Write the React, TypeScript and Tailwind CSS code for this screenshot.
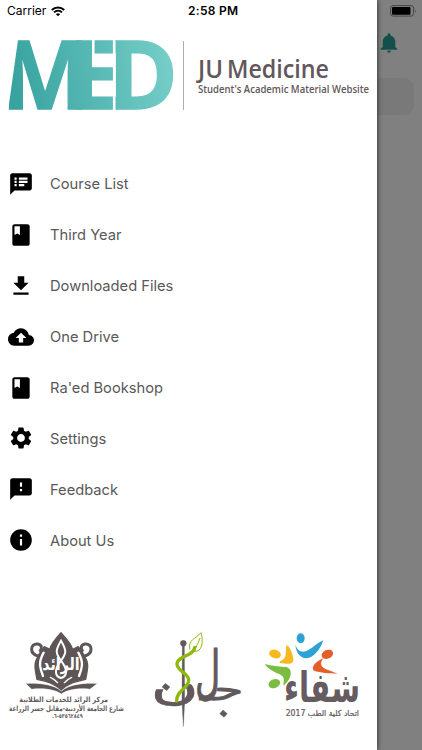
import React from 'react';
import {
  MdSpeakerNotes,
  MdBook,
  MdFileDownload,
  MdBackup,
  MdSettings,
  MdFeedback,
  MdInfo,
} from 'react-icons/md';
import { IoMdNotifications } from 'react-icons/io';
import type { IconType } from 'react-icons';

interface MenuItem {
  label: string;
  icon: IconType;
}

const menuItems: MenuItem[] = [
  { label: 'Course List', icon: MdSpeakerNotes },
  { label: 'Third Year', icon: MdBook },
  { label: 'Downloaded Files', icon: MdFileDownload },
  { label: 'One Drive', icon: MdBackup },
  { label: "Ra'ed Bookshop", icon: MdBook },
  { label: 'Settings', icon: MdSettings },
  { label: 'Feedback', icon: MdFeedback },
  { label: 'About Us', icon: MdInfo },
];

const arabic = "overflow-visible font-['DejaVu_Sans',sans-serif]";

const StatusBar: React.FC = () => (
  <div className="flex h-[22px] items-center text-black">
    <span className="ml-[7px] w-[40px] text-[12px]">Carrier</span>
    <svg className="ml-[4px]" width="14" height="11" viewBox="0 0 14 11" fill="none" stroke="#000">
      <path d="M0.8 4A9 9 0 0 1 13.2 4" strokeWidth="2" />
      <path d="M3 6.3A5.9 5.9 0 0 1 11 6.3" strokeWidth="1.8" />
      <path d="M7 10.3L4.9 8.2A3 3 0 0 1 9.1 8.2Z" fill="#000" stroke="none" />
    </svg>
    <span className="ml-[123px] text-[12px] font-semibold tracking-[0.3px] whitespace-nowrap">2:58 PM</span>
  </div>
);

const MedLogo: React.FC = () => (
  <svg className="overflow-visible" width="377" height="90" viewBox="0 22 377 90">
    <defs>
      <linearGradient id="teal" gradientUnits="userSpaceOnUse" x1="8" y1="90" x2="173" y2="60">
        <stop offset="0" stopColor="#36a19e" />
        <stop offset="1" stopColor="#76cec8" />
      </linearGradient>
    </defs>
    <text
      x="1 68.5 108"
      y="109"
      fill="url(#teal)"
      stroke="url(#teal)"
      strokeWidth="1.4"
      fontSize="94.5"
      fontWeight="700"
      className="font-['Open_Sans',sans-serif]"
    >
      MED
    </text>
    {/* slanted outer edge of the M, and the gaps around the E */}
    <path d="M6 40H18L8 111H6Z" fill="#fff" />
    <path d="M93.3 40V55.5M114.2 40V111" stroke="#fff" strokeWidth="2.6" />
    <path d="M183.5 41V110" stroke="#b0acac" strokeWidth="1" />
    <g fill="#62575a" className="font-['Open_Sans',sans-serif]">
      <text x="198" y="78" fontSize="25" fontWeight="600" textLength="25" lengthAdjust="spacingAndGlyphs">JU</text>
      <text x="227" y="78" fontSize="25" fontWeight="600" textLength="102" lengthAdjust="spacingAndGlyphs">Medicine</text>
      <text x="198" y="92.5" fontSize="11" fontWeight="600" textLength="171" lengthAdjust="spacingAndGlyphs">Student's Academic Material Website</text>
    </g>
  </svg>
);

const BookshopLogo: React.FC = () => (
  <svg width="130" height="110" viewBox="0 0 390 330" className={arabic}>
    <g fill="#5e5557" stroke="#5e5557" strokeLinejoin="round">
      <path d="M168 38C150 58 138 72 134 88L118 80C106 96 100 104 98 112C84 130 92 156 96 178C124 184 150 190 168 212C187 190 214 184 242 178C246 156 254 130 240 112C238 104 232 96 220 80L203 88C199 72 186 58 168 38Z" strokeWidth="4" />
      <path d="M98 108C72 100 76 70 98 72C110 74 112 84 106 92M240 108C266 100 262 70 240 72C228 74 226 84 232 92" fill="none" strokeWidth="9" strokeLinecap="round" />
    </g>
    <path d="M61 190C103 188 145 192 169 213C193 192 237 188 278 190L255 208C223 204 190 208 169 222C147 208 114 204 80 208Z" fill="#5e5557" stroke="#fff" strokeWidth="2" />
    <g fill="none" stroke="#fff" strokeLinecap="round" strokeWidth="7">
      <path d="M168 62C150 92 152 100 168 122C190 150 186 170 168 174C150 170 146 150 168 122C184 100 186 92 168 62Z" strokeWidth="6" />
      <path d="M116 98C100 126 104 142 114 168M220 98C236 126 232 142 222 168" />
      <path d="M136 172C146 176 152 182 158 188M200 172C190 176 184 182 178 188" strokeWidth="4" />
    </g>
    <text x="168" y="150" textAnchor="middle" fontSize="52" fontWeight="700" fill="#fff" textLength="112" lengthAdjust="spacingAndGlyphs">الرائد</text>
    <g fill="#625a5b" textAnchor="middle">
      <text x="176" y="247" fontSize="22" fontWeight="700" textLength="266" lengthAdjust="spacingAndGlyphs">مركز الرائد للخدمات الطلابية</text>
      <text x="184" y="274" fontSize="22" fontWeight="700" textLength="344" lengthAdjust="spacingAndGlyphs">شارع الجامعة الأردنية-مقابل جسر الزراعة</text>
      <text x="187" y="294" fontSize="18" fontWeight="700" direction="ltr" unicodeBidi="bidi-override" textLength="92" lengthAdjust="spacingAndGlyphs">.٦-٥٣٥٦٢٨٤٩</text>
    </g>
  </svg>
);

const CommitteesLogo: React.FC = () => (
  <svg width="110" height="110" viewBox="0 0 330 330" className={arabic}>
    <g fill="#62595c" stroke="#62595c">
      <circle cx="130" cy="70" r="9" />
      <path d="M127 70H133L134 245L130 320L126 245Z" strokeWidth="1" />
      <path d="M76 190L90 201L80 212L66 201ZM249 270L262 281L252 292L239 281Z" strokeWidth="1" />
      <text transform="translate(32 236) scale(1.75 1.1)" fontSize="112" strokeWidth="2">ں</text>
      <text transform="translate(165 220) scale(.95 1.6)" fontSize="110" strokeWidth="2">ل</text>
      <text transform="translate(180 240) scale(1.3 .85)" fontSize="110" strokeWidth="3">حـ</text>
    </g>
    <g fill="none" stroke="#8fb90d" strokeLinecap="round">
      <path d="M164 82C162 109 115 106 111 130C109 154 147 158 146 181C145 206 109 211 110 243" strokeWidth="10" />
      <path d="M164 94C187 96 191 66 183 38C167 58 144 57 149 87M164 94C169 80 174 68 180 55" strokeWidth="3" />
    </g>
  </svg>
);

const ShifaLogo: React.FC = () => (
  <svg width="127" height="110" viewBox="0 0 381 330" className={arabic}>
    <g fill="#f4ba20">
      <ellipse cx="75" cy="102" rx="18" ry="13" transform="rotate(18 75 102)" />
      <path d="M109 76C117 76 127 96 130 116C132 132 120 134 90 129C86 124 92 124 100 118C110 110 107 94 109 76Z" />
    </g>
    <g fill="#2da3d5">
      <ellipse cx="152" cy="55" rx="12" ry="15" />
      <path d="M136 75C143 91 151 98 167 94C187 86 200 70 220 61C213 84 192 114 169 115C149 114 138 96 136 75Z" />
    </g>
    <g fill="#e45d2b">
      <ellipse cx="232" cy="103" rx="18" ry="13" transform="rotate(-23 232 103)" />
      <path d="M221 114C212 124 208 138 225 146L263 161C240 160 210 158 192 152C180 142 200 122 221 114Z" />
    </g>
    <g fill="#7bbd42">
      <ellipse cx="73" cy="191" rx="18" ry="13" transform="rotate(-20 73 191)" />
      <path d="M44 132C66 138 88 140 110 141C132 150 122 180 101 197C98 190 108 172 92 164C76 158 55 148 44 132Z" />
    </g>
    <g fill="#655b60" textAnchor="middle">
      <text transform="translate(216 245) scale(1 1.3)" fontSize="96" fontWeight="700" textLength="228" lengthAdjust="spacingAndGlyphs">شفاء</text>
      <text x="217" y="289" fontSize="25" direction="rtl" stroke="#655b60" strokeWidth=".7" textLength="220" lengthAdjust="spacingAndGlyphs">اتحاد كلية الطب 2017</text>
    </g>
  </svg>
);

const App: React.FC = () => {
  return (
    <div className="flex h-[750px] w-[422px] overflow-hidden bg-[#808080] font-['Inter',sans-serif]">
      <aside className="z-10 flex w-[377px] shrink-0 flex-col bg-white shadow-[0_0_5px_rgba(0,0,0,0.75)]">
        <StatusBar />
        <MedLogo />
        <nav className="mt-[46px] flex flex-col">
          {menuItems.map(({ label, icon: Icon }) => (
            <a key={label} className="flex h-[50.9px] items-center pt-px pl-2">
              <Icon className="h-[26px] w-[26px] text-black" />
              <span className="mt-px ml-4 text-[14.7px] text-[#595959]">{label}</span>
            </a>
          ))}
        </nav>
        <footer className="mt-auto mb-5 flex pl-[5px]">
          <BookshopLogo />
          <div className="ml-[5px] flex">
            <CommitteesLogo />
            <ShifaLogo />
          </div>
        </footer>
      </aside>

      <div className="flex flex-1 flex-col">
        <div className="flex h-[22px] items-center pl-[13px]">
          <svg width="28" height="12" viewBox="0 0 28 12">
            <rect x="0.6" y="0.6" width="23" height="10.5" rx="2.5" fill="none" stroke="#454545" />
            <rect x="2" y="2" width="18.5" height="7.7" rx="1" fill="#000" />
            <path d="M25 4V8Q26.5 6 25 4" fill="#454545" />
          </svg>
        </div>
        <IoMdNotifications className="mt-[9px] h-6 w-6 text-[#154f4b]" />
        <div className="mt-[23px] h-[37px] w-[37px] rounded-r-[10px] bg-[#797979]" />
      </div>
    </div>
  );
};

export default App;
